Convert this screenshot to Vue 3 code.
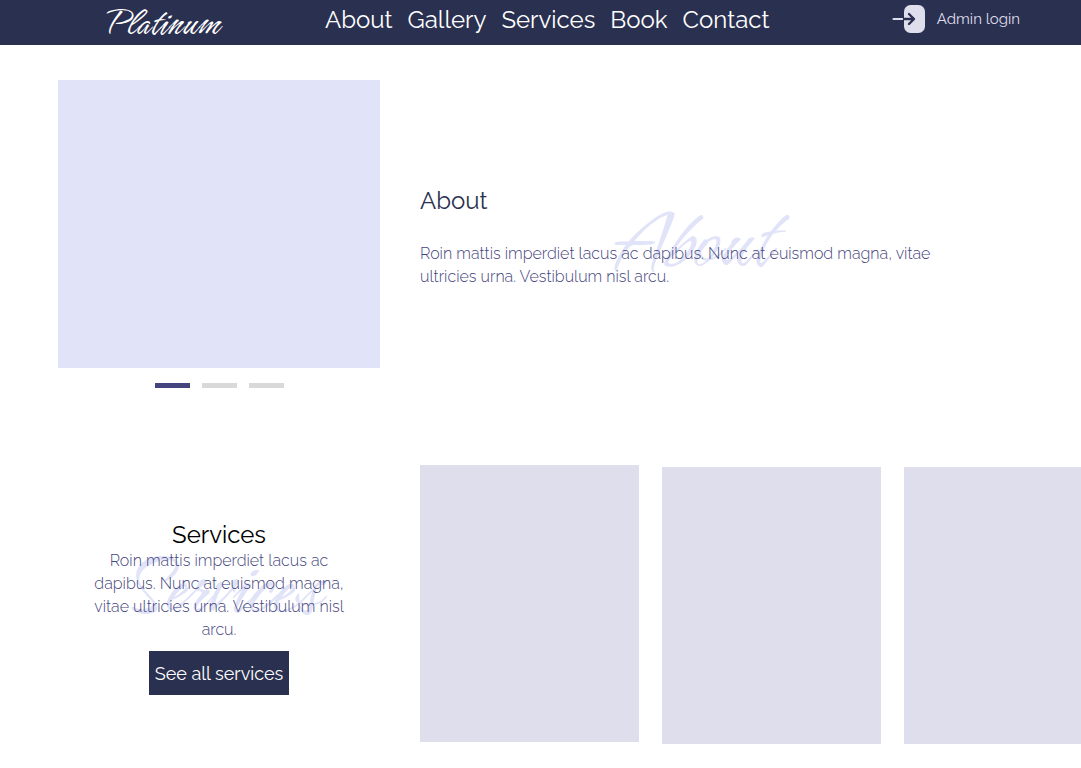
<script setup>
const links = ['About', 'Gallery', 'Services', 'Book', 'Contact']
const slides = [1, 2, 3]
const cards = [1, 2, 3]
</script>

<template>
  <div class="page">
    <header class="bar">
      <a class="logo script" href="#">Platinum</a>
      <nav class="nav">
        <a v-for="link in links" :key="link" :href="'#' + link.toLowerCase()">{{ link }}</a>
      </nav>
      <a class="login" href="#login">
        <svg width="34" height="30" viewBox="0 0 34 30" fill="none" aria-hidden="true">
          <rect x="12" y="1" width="21" height="28" rx="6.500" fill="#dfdeec" />
          <path d="M1.500 15H12" stroke="#dfdeec" stroke-width="2.200" stroke-linecap="round" />
          <path d="M12 15H21M17 10L22 15L17 20" stroke="#2a3050" stroke-width="2.400" stroke-linecap="round" stroke-linejoin="round" />
        </svg>
        <span>Admin login</span>
      </a>
    </header>

    <main>
      <section id="about" class="row about">
        <div class="gallery">
          <div class="photo"></div>
          <div class="dots">
            <button
              v-for="slide in slides"
              :key="slide"
              type="button"
              class="dot"
              :class="{ active: slide === 1 }"
              :aria-label="'Slide ' + slide"
            ></button>
          </div>
        </div>
        <div class="about-text">
          <span class="mark mark-about script" aria-hidden="true">About</span>
          <h2>About</h2>
          <p>Roin mattis imperdiet lacus ac dapibus. Nunc at euismod magna, vitae ultricies urna. Vestibulum nisl arcu.</p>
        </div>
      </section>

      <section id="services" class="row services">
        <div class="services-text">
          <span class="mark mark-services script" aria-hidden="true">Services</span>
          <h2>Services</h2>
          <p>Roin mattis imperdiet lacus ac dapibus. Nunc at euismod magna, vitae ultricies urna. Vestibulum nisl arcu.</p>
          <button type="button" class="all">See all services</button>
        </div>
        <div class="cards">
          <div v-for="card in cards" :key="card" class="card"></div>
        </div>
      </section>
    </main>
  </div>
</template>

<style>
body {
  margin: 0;
  background: #fff;
}
</style>

<style scoped>
.page {
  overflow: hidden;
  font-family: Raleway, Lato, sans-serif;
  font-size: 16px;
  color: #45457d;
}
.script {
  font-family: Hurricane, "Liberation Serif", cursive;
}
a {
  color: #fff;
  text-decoration: none;
}
.bar {
  display: grid;
  grid-template-columns: 322px 1fr auto;
  align-items: center;
  height: 45px;
  padding-right: 61px;
  background: #2a3050;
}
.logo {
  padding-left: 107px;
  font-size: 42px;
  line-height: 44px;
}
.nav {
  display: flex;
  gap: 15px;
  padding-left: 3px;
  margin-bottom: 6px;
  font-size: 24px;
  line-height: 36px;
}
.login {
  display: flex;
  align-items: center;
  gap: 11px;
  height: 30px;
  margin-bottom: 8px;
  font-size: 15px;
  color: #dfdeec;
}
.row {
  display: grid;
  grid-template-columns: 322px 1fr;
  column-gap: 40px;
  padding-left: 58px;
}
.about {
  align-items: center;
  padding-top: 35px;
}
.photo {
  height: 288px;
  background: #e1e4f8;
}
.dots {
  display: flex;
  justify-content: center;
  gap: 12px;
  margin-top: 15px;
}
.dot {
  width: 35px;
  height: 5px;
  padding: 0;
  border: 0;
  background: #d9d9d9;
}
.dot.active {
  background: #45457d;
}
h2 {
  position: relative;
  margin: 0;
  font-size: 24px;
  font-weight: 400;
  line-height: 28px;
}
p {
  position: relative;
  margin: 0;
  font-weight: 300;
  line-height: 23px;
}
.mark {
  position: absolute;
  line-height: 80px;
  color: #e1e4f8;
}
.about-text {
  position: relative;
  max-width: 520px;
  padding-top: 7px;
}
.about-text h2 {
  margin-bottom: 27px;
  color: #2a3050;
}
.mark-about {
  top: 22px;
  left: 198px;
  font-size: 92px;
}
.services {
  margin-top: 77px;
}
.services-text {
  position: relative;
  padding: 0 32px;
  margin-top: 56px;
  text-align: center;
}
.services-text h2 {
  color: #000;
}
.mark-services {
  top: 27px;
  left: 64px;
  font-size: 92px;
}
.all {
  height: 44px;
  margin-top: 10px;
  padding: 0 6px;
  border: 0;
  background: #2a3050;
  color: #fff;
  font: inherit;
  font-size: 18px;
}
.cards {
  display: grid;
  grid-template-columns: repeat(3, 219px);
  gap: 23px;
  overflow: hidden;
}
.card {
  height: 277px;
  margin-top: 2px;
  background: #dfdeec;
}
.card:first-child {
  margin-top: 0;
}
</style>
